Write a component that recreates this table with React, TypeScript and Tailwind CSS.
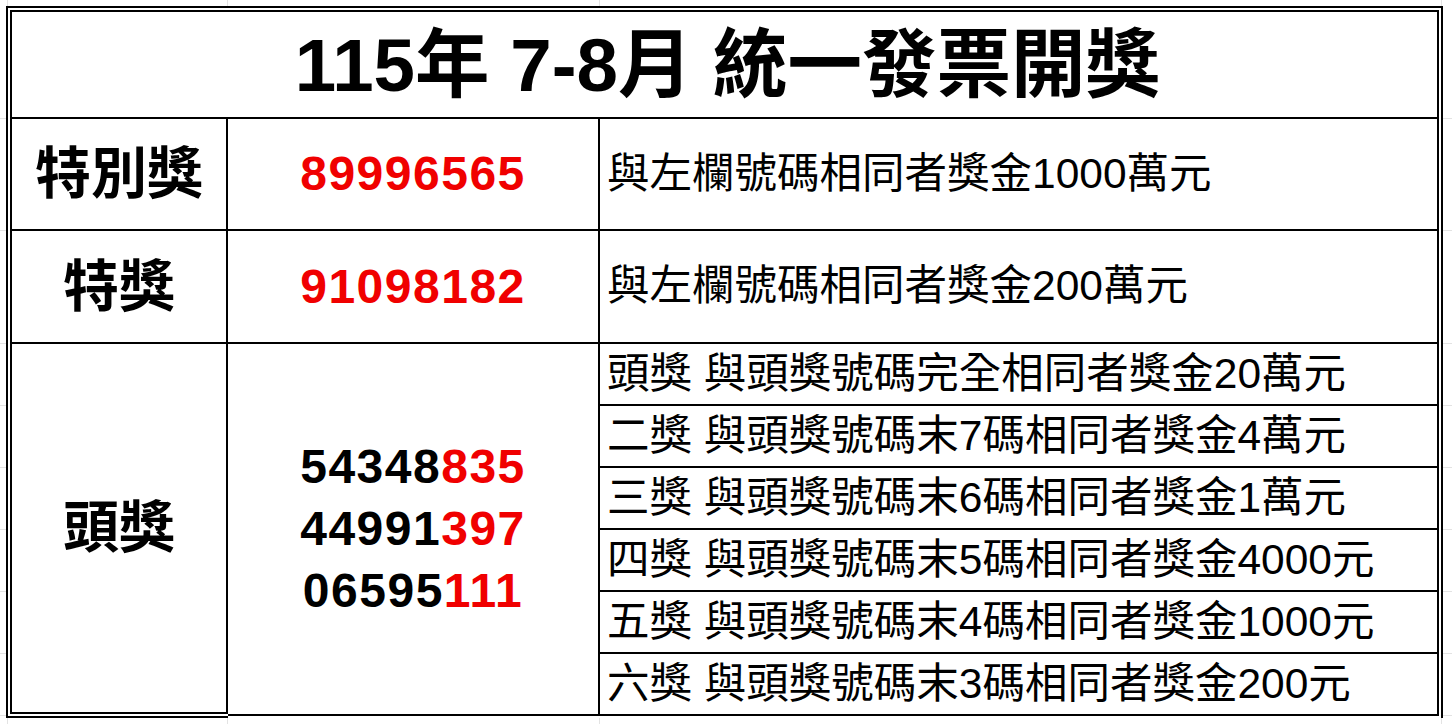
const FONT = "font-['Liberation_Sans','Noto_Sans_CJK_TC',sans-serif]";

const gridRows = [113, 112, 113, 62, 62, 62, 62, 62, 62];

const MarginColumn = ({ className }: { className: string }) => (
  <div className={className}>
    {gridRows.map((h, i) => (
      <div key={i} className="border-b border-[#e3e3e3]" style={{ height: h }} />
    ))}
  </div>
);

const GridStrip = ({ height }: { height: string }) => (
  <div className={`flex ${height}`}>
    <div className="w-[8px] border-r border-[#e3e3e3]" />
    <div className="w-[220px] border-r border-[#e3e3e3]" />
    <div className="w-[372px] border-r border-[#e3e3e3]" />
    <div className="w-[842px] border-r border-[#e3e3e3]" />
  </div>
);

const subPrizes = [
  "頭獎 與頭獎號碼完全相同者獎金20萬元",
  "二獎 與頭獎號碼末7碼相同者獎金4萬元",
  "三獎 與頭獎號碼末6碼相同者獎金1萬元",
  "四獎 與頭獎號碼末5碼相同者獎金4000元",
  "五獎 與頭獎號碼末4碼相同者獎金1000元",
  "六獎 與頭獎號碼末3碼相同者獎金200元",
];

const firstNumbers = [
  ["54348", "835"],
  ["44991", "397"],
  ["06595", "111"],
];

const App = () => {
  return (
    <div className={`w-[1452px] h-[724px] bg-white overflow-hidden text-black ${FONT}`}>
      {/* top margin */}
      <GridStrip height="h-[6px]" />

      <div className="flex">
        <MarginColumn className="w-[6px]" />

        {/* outer border of double line */}
        <div className="w-[1437px] border-t-2 border-x-2 border-black">
          <div className="mt-[2px] mx-[2px] border-t-2 border-r-2 border-black">
            {/* title */}
            <div className="h-[107px] border-l-2 border-b-2 border-black flex items-center justify-center pt-[4px] pl-[6px]">
              <h1 className="text-[74.5px] font-bold leading-none">115年 7-8月 統一發票開獎</h1>
            </div>

            {/* special prize */}
            <div className="h-[112px] border-l-2 border-b-2 border-black flex">
              <div className="w-[216px] border-r-2 border-black flex items-center justify-center">
                <span className="text-[56px] font-bold leading-none">特別獎</span>
              </div>
              <div className="w-[372px] border-r-2 border-black flex items-center justify-center">
                <span className="text-[48px] font-bold leading-none tracking-[1.5px] text-[#f00000]">89996565</span>
              </div>
              <div className="flex-1 flex items-center pl-[7px]">
                <span className="text-[42.5px] leading-none">與左欄號碼相同者獎金1000萬元</span>
              </div>
            </div>

            {/* grand prize */}
            <div className="h-[113px] border-l-2 border-b-2 border-black flex">
              <div className="w-[216px] border-r-2 border-black flex items-center justify-center">
                <span className="text-[56px] font-bold leading-none">特獎</span>
              </div>
              <div className="w-[372px] border-r-2 border-black flex items-center justify-center">
                <span className="text-[48px] font-bold leading-none tracking-[1.5px] text-[#f00000]">91098182</span>
              </div>
              <div className="flex-1 flex items-center pl-[7px]">
                <span className="text-[42.5px] leading-none">與左欄號碼相同者獎金200萬元</span>
              </div>
            </div>

            {/* first prize */}
            <div className="flex">
              <div className="w-[218px] mb-[2px] border-l-2 border-r-2 border-b-2 border-black flex items-center justify-center">
                <span className="text-[56px] font-bold leading-none">頭獎</span>
              </div>
              <div className="w-[372px] border-r-2 border-b-2 border-black flex flex-col items-center justify-center">
                {firstNumbers.map(([head, tail]) => (
                  <div key={head + tail} className="text-[48px] font-bold leading-[62px] tracking-[1.5px]">
                    {head}
                    <span className="text-[#f00000]">{tail}</span>
                  </div>
                ))}
              </div>
              <div className="flex-1">
                {subPrizes.map((p) => (
                  <div key={p} className="h-[62px] border-b-2 border-black flex items-center pl-[7px]">
                    <span className="text-[42.5px] leading-none">{p}</span>
                  </div>
                ))}
              </div>
            </div>
          </div>
          {/* outer bottom line under the label column */}
          <div className="w-[220px] h-[2px] bg-black" />
        </div>

        <MarginColumn className="flex-1" />
      </div>

      {/* bottom margin */}
      <GridStrip height="h-[6px]" />
    </div>
  );
};

export default App;
